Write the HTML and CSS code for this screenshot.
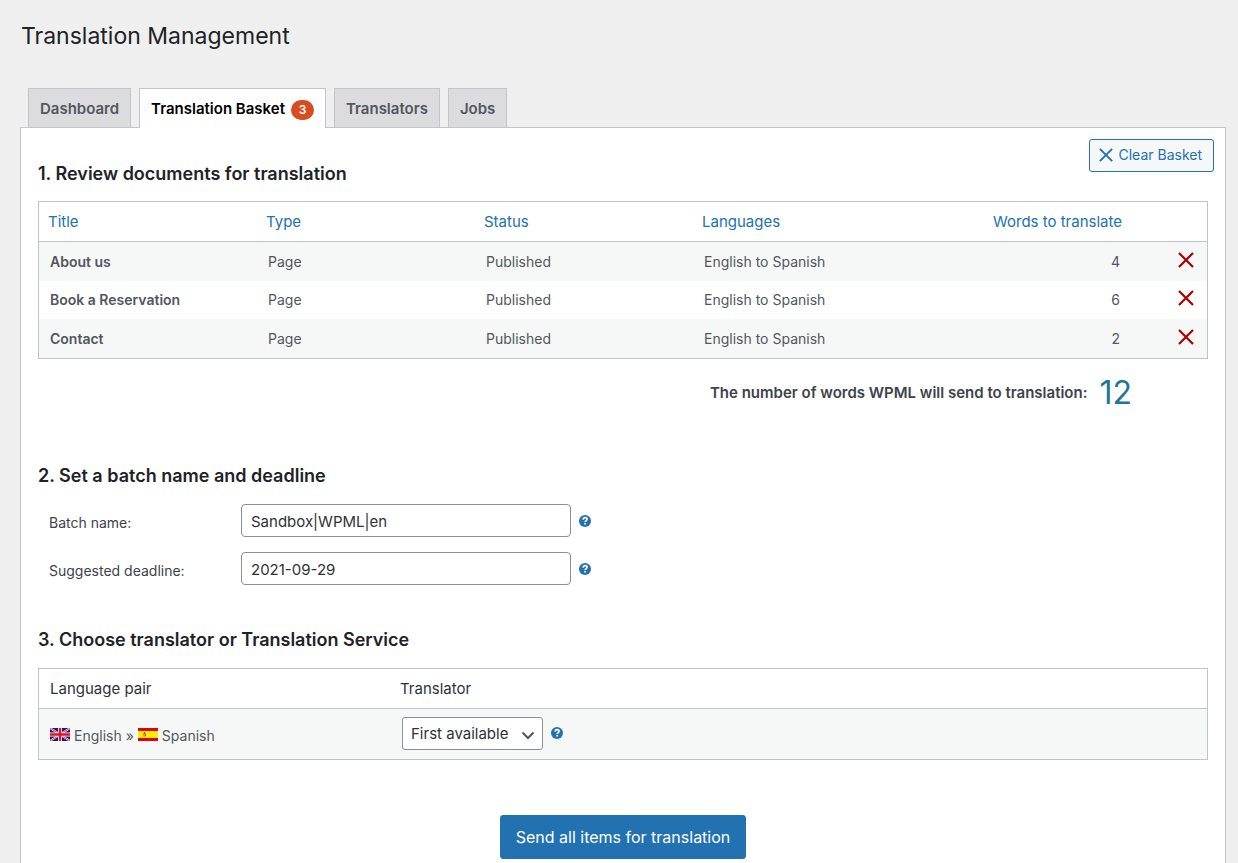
FILE: index.html
```html
<!DOCTYPE html>
<html lang="en">
<head>
<meta charset="utf-8">
<meta name="viewport" content="width=device-width, initial-scale=1">
<title>Translation Management</title>
<link rel="stylesheet" href="styles.css">
</head>
<body>
<svg class="sprite" aria-hidden="true">
  <symbol id="cross" viewBox="0 0 16 16"><path d="M1 1 15 15M15 1 1 15" fill="none" stroke="currentColor" stroke-width="2.2"/></symbol>
  <symbol id="help" viewBox="0 0 12 12"><circle cx="6" cy="6" r="6" fill="#2271b1"/><path d="M4.100 4.600C4.200 3.200 5 2.600 6.100 2.600c1.200 0 2 .7 2 1.700 0 1.400-1.900 1.300-1.900 2.700" fill="none" stroke="#fff" stroke-width="1.600"/><rect x="5.300" y="7.900" width="1.700" height="1.600" fill="#fff"/></symbol>
</svg>
<main class="page">
  <h1 class="page-title">Translation Management</h1>
  <nav class="tabs" aria-label="Sections">
    <a class="tab" href="#dashboard">Dashboard</a>
    <a class="tab tab-active" href="#basket" aria-current="page">Translation Basket <span class="badge">3</span></a>
    <a class="tab" href="#translators">Translators</a>
    <a class="tab" href="#jobs">Jobs</a>
  </nav>
  <form class="panel">
    <header class="panel-head">
      <h2 class="heading">1. Review documents for translation</h2>
      <button class="clear" type="button"><svg class="clear-icon" aria-hidden="true"><use href="#cross"/></svg>Clear Basket</button>
    </header>
    <section class="section">
      <table class="docs">
        <colgroup><col class="c-title"><col class="c-type"><col class="c-status"><col class="c-lang"><col class="c-words"><col class="c-remove"></colgroup>
        <thead>
          <tr><th>Title</th><th>Type</th><th>Status</th><th>Languages</th><th class="num">Words to translate</th><td></td></tr>
        </thead>
        <tbody>
          <tr><th scope="row">About us</th><td>Page</td><td>Published</td><td>English to Spanish</td><td class="num">4</td><td class="act"><button class="remove" type="button" aria-label="Remove About us"><svg class="remove-icon"><use href="#cross"/></svg></button></td></tr>
          <tr><th scope="row">Book a Reservation</th><td>Page</td><td>Published</td><td>English to Spanish</td><td class="num">6</td><td class="act"><button class="remove" type="button" aria-label="Remove Book a Reservation"><svg class="remove-icon"><use href="#cross"/></svg></button></td></tr>
          <tr><th scope="row">Contact</th><td>Page</td><td>Published</td><td>English to Spanish</td><td class="num">2</td><td class="act"><button class="remove" type="button" aria-label="Remove Contact"><svg class="remove-icon"><use href="#cross"/></svg></button></td></tr>
        </tbody>
      </table>
      <p class="total">The number of words WPML will send to translation: <span class="total-number">12</span></p>
    </section>
    <section class="section batch">
      <h2 class="heading">2. Set a batch name and deadline</h2>
      <div class="fields">
        <label class="label" for="batch">Batch name:</label>
        <div class="control"><input class="input" id="batch" type="text" value="Sandbox|WPML|en"><svg class="help" role="img" aria-label="Help"><use href="#help"/></svg></div>
        <label class="label" for="deadline">Suggested deadline:</label>
        <div class="control"><input class="input" id="deadline" type="text" value="2021-09-29"><svg class="help" role="img" aria-label="Help"><use href="#help"/></svg></div>
      </div>
    </section>
    <section class="section choose">
      <h2 class="heading">3. Choose translator or Translation Service</h2>
      <table class="pairs">
        <colgroup><col class="c-pair"><col></colgroup>
        <thead><tr><th>Language pair</th><th class="translator" id="translator-head">Translator</th></tr></thead>
        <tbody>
          <tr>
            <td>
              <div class="pair">
                <svg class="flag" viewBox="0 0 20 13" aria-hidden="true"><rect width="20" height="13" fill="#1a1a80"/><path d="M0 0 20 13M20 0 0 13" stroke="#f0c8d8" stroke-width="2"/><path d="M0 0 20 13M20 0 0 13" stroke="#e0405a" stroke-width=".8"/><path d="M10 0V13M0 6.500H20" stroke="#fff" stroke-width="4"/><path d="M10 0V13M0 6.500H20" stroke="#e01025" stroke-width="2.400"/></svg>
                <span>English »</span>
                <svg class="flag" viewBox="0 0 20 13" aria-hidden="true"><rect width="20" height="13" fill="#e4000c"/><rect y="3" width="20" height="7" fill="#ffee00"/><path d="M5 5h3v3L6.500 9 5 8z" fill="#e59a35"/><path d="M6.500 4v2M7.500 6v2" stroke="#c8502a" stroke-width="1"/></svg>
                <span>Spanish</span>
              </div>
            </td>
            <td>
              <div class="control">
                <span class="select-wrap"><select class="select" aria-labelledby="translator-head"><option>First available</option></select><svg class="chevron" viewBox="0 0 14 9" aria-hidden="true"><path d="M1.500 1.500 7 7l5.500-5.500" fill="none" stroke="#50575e" stroke-width="2"/></svg></span>
                <svg class="help help-raised" role="img" aria-label="Help"><use href="#help"/></svg>
              </div>
            </td>
          </tr>
        </tbody>
      </table>
    </section>
    <div class="submit-row"><button class="submit" type="button">Send all items for translation</button></div>
  </form>
</main>
</body>
</html>
```
FILE: styles.css
```css
* { box-sizing: border-box; }
html { background: #efefef; }
body { margin: 0; color: #3c434a; font: 14px/20px Inter, "Liberation Sans", sans-serif; }
button, input, select { font: inherit; }
.sprite { position: absolute; width: 0; height: 0; }
.page { padding: 21px 12px 0 21px; }
.page-title { margin: 0; color: #1d2327; font-size: 23px; font-weight: 400; line-height: 30px; }

.tabs { display: flex; gap: 8px; margin-top: 37px; padding-left: 7px; }
.tab { height: 39px; padding: 8px 11px; border: 1px solid #c3c4c7; border-bottom: 0; background: #dcdcde; color: #50575e; font-size: 15px; font-weight: 600; line-height: 24px; text-decoration: none; white-space: nowrap; }
.tab-active { display: flex; gap: 6px; align-items: center; height: 40px; margin-bottom: -1px; background: #fff; color: #000; z-index: 1; }
.badge { min-width: 23px; margin-top: 2px; border-radius: 10px; background: #d54e21; color: #fff; font-size: 12px; line-height: 20px; text-align: center; }

.panel { margin-left: -1px; padding: 11px 11px 24px; border: 1px solid #c3c4c7; background: #fff; }
.panel-head { display: flex; justify-content: space-between; align-items: flex-start; padding-left: 6px; }
.heading { margin: 0; color: #1d2327; font-size: 18px; font-weight: 600; line-height: 24px; }
.panel-head .heading { padding-top: 23px; }
.clear { display: flex; align-items: center; gap: 5px; height: 33px; padding: 0 11px 2px 9px; border: 1px solid #2271b1; border-radius: 3px; background: #f6f7f7; color: #2271b1; }
.clear-icon { width: 14px; height: 14px; }
.section { padding: 0 6px; }

table { width: 100%; border: 1px solid #c3c4c7; border-collapse: separate; border-spacing: 0; table-layout: fixed; }
th, td { padding: 0 11px; text-align: left; font-weight: 400; }
thead th, thead td { height: 40px; padding: 0 9px; border-bottom: 1px solid #c3c4c7; font-size: 15px; }
.docs { margin-top: 15px; color: #50575e; }
.docs thead { color: #2271b1; }
.docs tbody tr { height: 39px; }
.docs tbody tr:nth-child(even) { height: 38px; }
.docs tbody th { font-weight: 600; }
tbody tr:nth-child(odd) { background: #f6f7f7; }
.c-title, .c-type, .c-status, .c-lang { width: 218px; }
.c-remove { width: 76px; }
.docs .num { text-align: right; }
.docs .act { text-align: right; }
.remove { display: block; margin-left: auto; padding: 0 2px 4px; border: 0; background: none; color: #a00; }
.remove-icon { display: block; width: 16px; height: 16px; }
.total { display: flex; justify-content: flex-end; align-items: center; gap: 12px; margin: 14px 76px 0 0; font-size: 15px; font-weight: 600; line-height: 40px; }
.total-number { color: #21759b; font-size: 32px; font-weight: 400; }

.batch { padding-top: 51px; }
.fields { display: grid; grid-template-columns: 192px 1fr; align-items: center; gap: 15px 0; padding: 16px 0 0 11px; }
.label { padding-top: 5px; }
.control { display: flex; align-items: center; gap: 8px; }
.input { width: 330px; height: 33px; padding: 1px 9px 0; border: 1px solid #8c8f94; border-radius: 4px; background: #fff; color: #2c3338; font-size: 15px; }
.help { width: 12px; height: 12px; }
.help-raised { margin-bottom: 3px; }

.choose { padding-top: 43px; }
.pairs { margin-top: 16px; color: #50575e; }
.pairs thead th { padding: 0 11px; color: #2c3338; }
.pairs thead .translator { padding-left: 9px; }
.c-pair { width: 352px; }
.pairs tbody td { height: 50px; }
.pair { display: flex; align-items: center; gap: 4px; padding-top: 3px; }
.flag { width: 20px; height: 13px; margin-top: -3px; }
.select-wrap { position: relative; padding-bottom: 1px; }
.select { display: block; width: 141px; height: 33px; padding: 1px 8px 0; appearance: none; border: 1px solid #8c8f94; border-radius: 3px; background: #fff; color: #2c3338; font-size: 15px; }
.chevron { position: absolute; right: 8px; top: 14px; width: 14px; height: 9px; pointer-events: none; }

.submit-row { display: flex; justify-content: center; margin-top: 55px; }
.submit { height: 44px; padding: 0 15px; border: 1px solid #2271b1; border-radius: 3px; background: #2271b1; color: #fff; font-size: 16px; }
```
